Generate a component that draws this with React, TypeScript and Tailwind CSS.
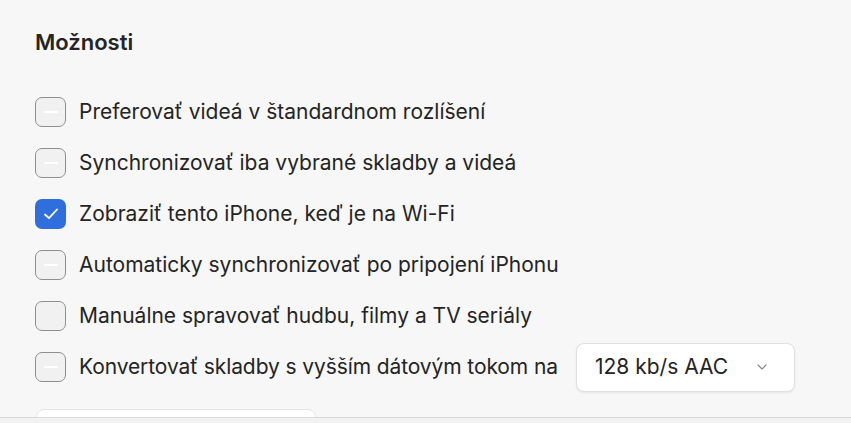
import { ChevronDown } from 'lucide-react';

const options = [
  { label: 'Preferovať videá v štandardnom rozlíšení', checked: false, dash: true },
  { label: 'Synchronizovať iba vybrané skladby a videá', checked: false, dash: true },
  { label: 'Zobraziť tento iPhone, keď je na Wi-Fi', checked: true, dash: false },
  { label: 'Automaticky synchronizovať po pripojení iPhonu', checked: false, dash: true },
  { label: 'Manuálne spravovať hudbu, filmy a TV seriály', checked: false, dash: false },
];

function Checkbox({ checked, dash }: { checked: boolean; dash: boolean }) {
  if (checked) {
    return (
      <div className="w-[31px] h-[30px] rounded-[7px] bg-[#2f6fdd] flex items-center justify-center shrink-0">
        <svg width="20" height="20" viewBox="0 0 20 20" fill="none">
          <path d="M4 10.5 L8 14.2 L16 5.5" stroke="white" strokeWidth="1.8" strokeLinecap="round" strokeLinejoin="round" />
        </svg>
      </div>
    );
  }
  return (
    <div className="w-[31px] h-[30px] rounded-[7px] border-[1.5px] border-[#8f8f8f] bg-[#f1f1f1] flex items-center justify-center shrink-0">
      {dash && <div className="w-[14px] h-[1.5px] bg-white rounded-full" />}
    </div>
  );
}

export default function App() {
  return (
    <div className="w-[851px] h-[423px] bg-[#f7f7f7] flex flex-col overflow-hidden text-[#242424]" style={{ fontFamily: 'Inter, "Noto Sans", sans-serif' }}>
      <div className="flex-1 min-h-0 overflow-hidden pl-[35px] pt-[28px]">
        <h2 className="text-[22px] font-semibold leading-[28px]">Možnosti</h2>
        <div className="mt-[41px] flex flex-col gap-[21px]">
          {options.map((o) => (
            <label key={o.label} className="flex items-center gap-[13px] h-[30px]">
              <Checkbox checked={o.checked} dash={o.dash} />
              <span className="text-[21px] leading-[26px]">{o.label}</span>
            </label>
          ))}
          <div className="flex items-center h-[30px]">
            <label className="flex items-center gap-[13px]">
              <Checkbox checked={false} dash={true} />
              <span className="text-[21px] leading-[26px] tracking-[-0.1px]">Konvertovať skladby s vyšším dátovým tokom na</span>
            </label>
            <button className="ml-[18px] w-[219px] h-[49px] shrink-0 bg-white border border-[#e0e0e0] rounded-[8px] shadow-[0_1px_2px_rgba(0,0,0,0.08)] flex items-center justify-between pl-[18px] pr-[24px]">
              <span className="text-[21px] leading-[26px]">128 kb/s AAC</span>
              <ChevronDown className="w-[16px] h-[16px] text-[#8a8a8a]" strokeWidth={1.75} />
            </button>
          </div>
        </div>
        <div className="mt-[27px] ml-[1px] w-[280px] h-[20px] bg-white border border-[#e4e4e4] rounded-[8px]" />
      </div>
      <div className="h-[6px] shrink-0 bg-[#f2f2f2] border-t border-[#d9d9d9]" />
    </div>
  );
}
